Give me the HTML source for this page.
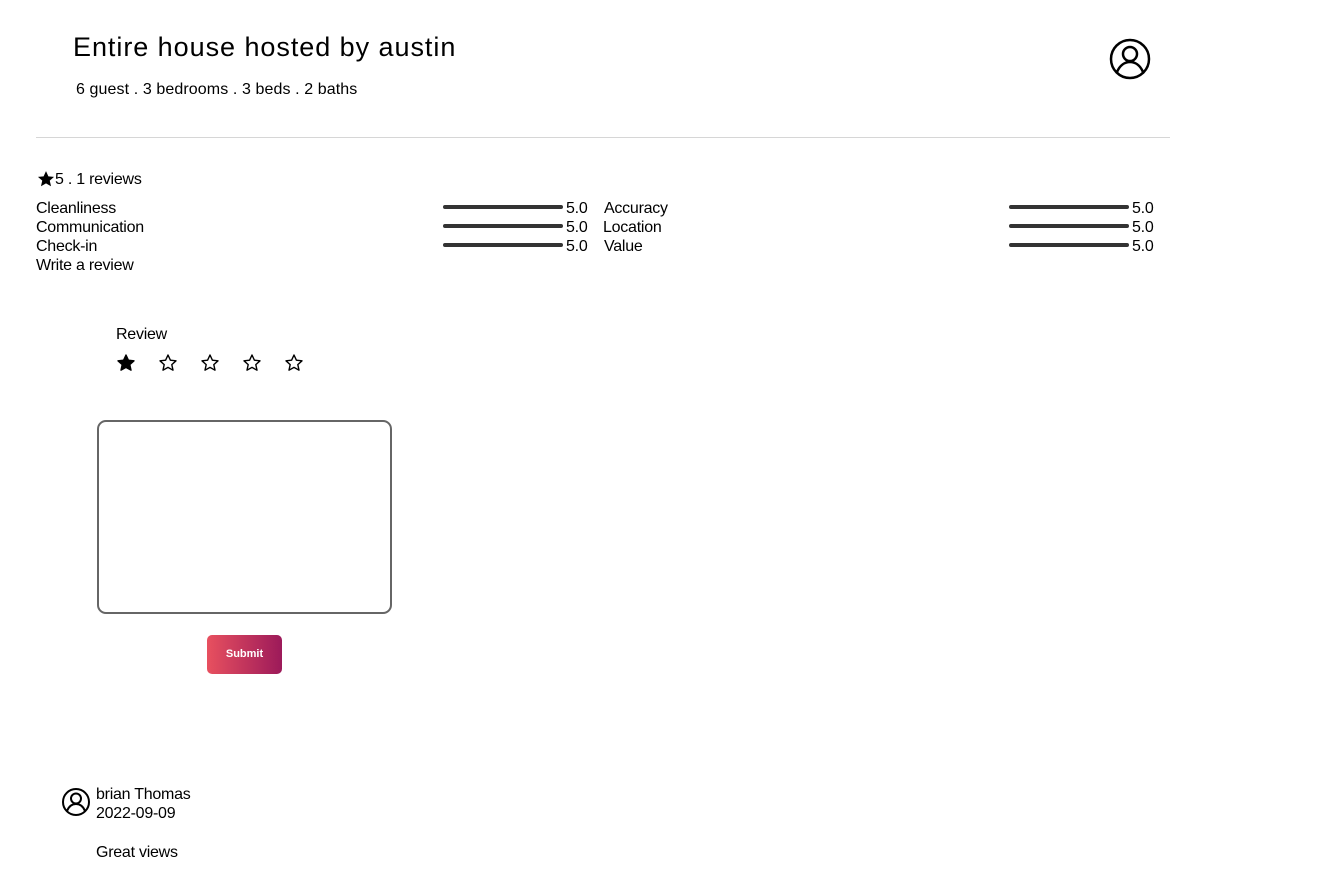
<!DOCTYPE html>
<html><head><meta charset="utf-8"><style>
*{margin:0;padding:0;box-sizing:border-box}
body{width:1330px;height:895px;background:#fff;font-family:"Liberation Sans",sans-serif;color:#000;position:relative;overflow:hidden}
.a{position:absolute;white-space:nowrap}
.t{font-size:16px;line-height:19px;letter-spacing:-0.25px}
.bar{position:absolute;height:4px;width:120px;background:#333;border-radius:2px}
</style></head><body>
<div class="a" style="left:73px;top:32px;font-size:27px;letter-spacing:0.95px">Entire house hosted by austin</div>
<div class="a t" style="left:76px;top:80px;letter-spacing:0.1px">6 guest . 3 bedrooms . 3 beds . 2 baths</div>
<svg class="a" style="left:1108px;top:37px" width="44" height="44" viewBox="0 0 44 44" fill="none" stroke="#000" stroke-width="2.5"><circle cx="22" cy="22" r="19"/><circle cx="22" cy="17" r="7"/><path d="M9 35c3-7 8-10 13-10s10 3 13 10"/></svg>
<div style="position:absolute;left:36px;top:137px;width:1134px;height:1px;background:#d6d6d6"></div>
<svg class="a" style="left:37px;top:170px" width="18" height="18" viewBox="0 0 24 24"><path d="M12 1.5l3.2 7 7.5.7-5.7 5 1.7 7.5L12 17.8 5.3 21.7 7 14.2 1.3 9.2l7.5-.7z"/></svg>
<div class="a t" style="left:55px;top:170px">5 . 1 reviews</div>
<div class="a t" style="left:36px;top:199px">Cleanliness</div>
<div class="a t" style="left:36px;top:218px">Communication</div>
<div class="a t" style="left:36px;top:237px">Check-in</div>
<div class="a t" style="left:36px;top:256px">Write a review</div>
<div class="bar" style="left:443px;top:205px"></div><div class="a t" style="left:566px;top:199px">5.0</div>
<div class="bar" style="left:443px;top:224px"></div><div class="a t" style="left:566px;top:218px">5.0</div>
<div class="bar" style="left:443px;top:243px"></div><div class="a t" style="left:566px;top:237px">5.0</div>
<div class="a t" style="left:604px;top:199px">Accuracy</div>
<div class="a t" style="left:603px;top:218px">Location</div>
<div class="a t" style="left:604px;top:237px">Value</div>
<div class="bar" style="left:1009px;top:205px"></div><div class="a t" style="left:1132px;top:199px">5.0</div>
<div class="bar" style="left:1009px;top:224px"></div><div class="a t" style="left:1132px;top:218px">5.0</div>
<div class="bar" style="left:1009px;top:243px"></div><div class="a t" style="left:1132px;top:237px">5.0</div>
<div class="a t" style="left:116px;top:325px">Review</div>
<svg class="a" style="left:116px;top:353px" width="200" height="20" viewBox="0 0 200 20">
<g stroke="#000" stroke-width="1.4" stroke-linejoin="round">
<path d="M10 2l2.4 5.2 5.6.6-4.2 3.8 1.2 5.6L10 14.4 5 17.2l1.2-5.6L2 7.8l5.6-.6z" fill="#000"/>
<path transform="translate(42 0)" d="M10 2l2.4 5.2 5.6.6-4.2 3.8 1.2 5.6L10 14.4 5 17.2l1.2-5.6L2 7.8l5.6-.6z" fill="none"/>
<path transform="translate(84 0)" d="M10 2l2.4 5.2 5.6.6-4.2 3.8 1.2 5.6L10 14.4 5 17.2l1.2-5.6L2 7.8l5.6-.6z" fill="none"/>
<path transform="translate(126 0)" d="M10 2l2.4 5.2 5.6.6-4.2 3.8 1.2 5.6L10 14.4 5 17.2l1.2-5.6L2 7.8l5.6-.6z" fill="none"/>
<path transform="translate(168 0)" d="M10 2l2.4 5.2 5.6.6-4.2 3.8 1.2 5.6L10 14.4 5 17.2l1.2-5.6L2 7.8l5.6-.6z" fill="none"/>
</g></svg>
<div style="position:absolute;left:97px;top:420px;width:295px;height:194px;border:2px solid #666;border-radius:9px"></div>
<div style="position:absolute;left:207px;top:635px;width:75px;height:39px;border-radius:5px;background:linear-gradient(90deg,#e8505f,#9c1a5a);color:#fff;font-size:11px;font-weight:bold;text-align:center;line-height:39px">Submit</div>
<svg class="a" style="left:61px;top:787px" width="30" height="30" viewBox="0 0 30 30" fill="none" stroke="#000" stroke-width="2"><circle cx="15" cy="15" r="13"/><circle cx="15" cy="11.5" r="5"/><path d="M6 24c2-5 5.5-7 9-7s7 2 9 7"/></svg>
<div class="a t" style="left:96px;top:785px">brian Thomas</div>
<div class="a t" style="left:96px;top:804px">2022-09-09</div>
<div class="a t" style="left:96px;top:843px">Great views</div>
</body></html>
